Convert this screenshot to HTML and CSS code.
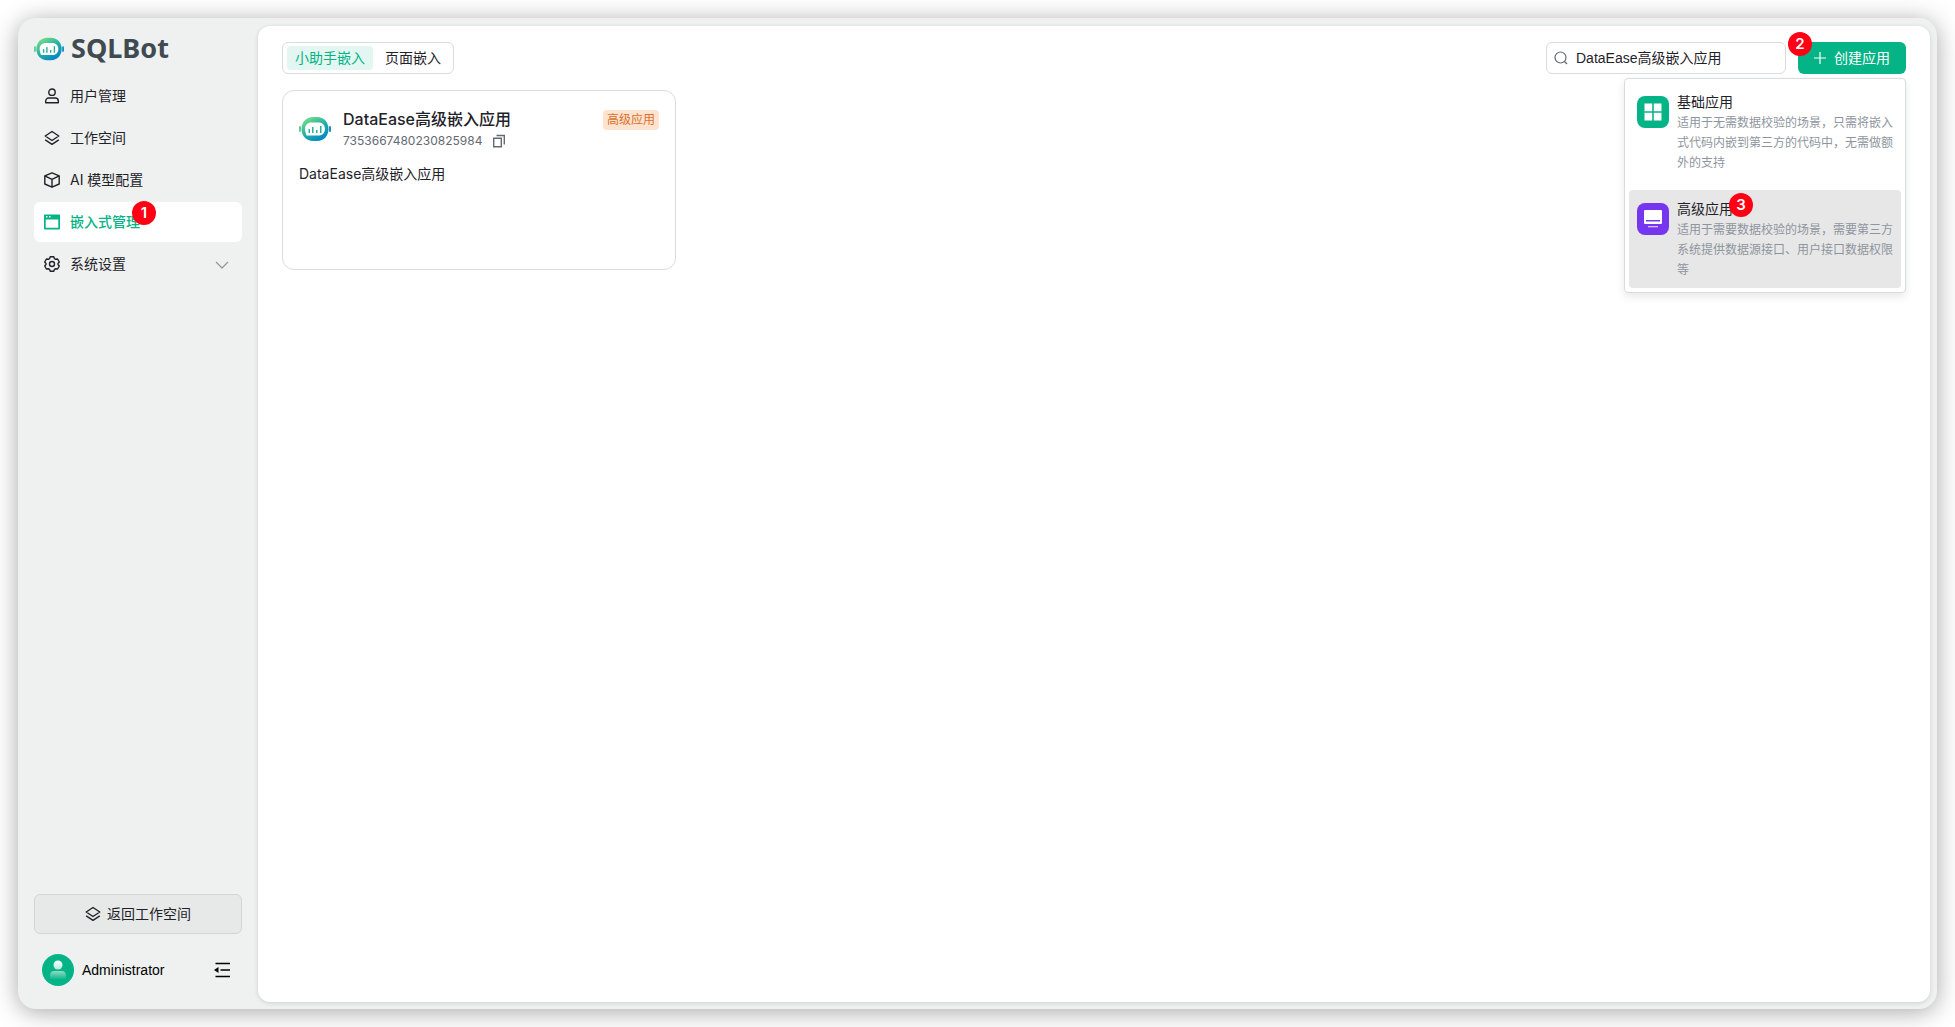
FILE: index.html
```html
<!DOCTYPE html>
<html lang="zh-CN">
<head>
<meta charset="utf-8">
<meta name="viewport" content="width=device-width, initial-scale=1">
<title>SQLBot</title>
<link rel="stylesheet" href="styles.css">
</head>
<body>
<svg class="defs" width="0" height="0" aria-hidden="true">
  <defs>
    <linearGradient id="bot-fill" x1="0.1" y1="0" x2="0.75" y2="1">
      <stop offset="0" stop-color="#84e384"/>
      <stop offset="0.5" stop-color="#27b3a4"/>
      <stop offset="1" stop-color="#0084c8"/>
    </linearGradient>
    <linearGradient id="avatar-head" x1="0" y1="0" x2="0" y2="1">
      <stop offset="0" stop-color="#fff"/>
      <stop offset="1" stop-color="#b8eadc"/>
    </linearGradient>
    <linearGradient id="avatar-body" x1="0" y1="0" x2="0" y2="1">
      <stop offset="0" stop-color="#8fdcc5"/>
      <stop offset="1" stop-color="#12b78e"/>
    </linearGradient>
    <symbol id="bot" viewBox="0 0 32 32">
      <rect x="0" y="13" width="2" height="6" rx="1" fill="#5fcf96"/>
      <rect x="30" y="13" width="2" height="6" rx="1" fill="#1a8fc0"/>
      <path fill="url(#bot-fill)" d="M14 4h4c7 0 11.500 5.500 11.500 12S25 28 18 28h-4C7 28 2.500 22.500 2.500 16S7 4 14 4Z"/>
      <path fill="#fff" d="M12.500 9.500c-4 0-6.500 2.600-6.500 6.300 0 2.700.8 4.200 1.500 6.700h12c3.900 0 6.500-2.700 6.500-6.500s-2.600-6.500-6.500-6.500Z"/>
      <g fill="#2fae9f">
        <rect x="9.500" y="16" width="1.500" height="4"/><rect x="13" y="14" width="1.500" height="6"/>
        <rect x="17" y="17" width="1.500" height="3"/><rect x="21" y="13" width="1.500" height="7"/>
      </g>
    </symbol>
    <symbol id="layers" viewBox="0 0 16 16">
      <path d="M8 1.500 14.800 6 8 10.500 1.200 6ZM1.200 9.800 8 14.300l6.800-4.500"/>
    </symbol>
  </defs>
</svg>
<div class="window">
  <aside class="sidebar">
    <div class="brand">
      <svg class="brand-icon"><use href="#bot"/></svg>
      <span class="brand-name">SQLBot</span>
    </div>
    <nav class="menu">
      <a class="menu-item" href="#">
        <svg class="icon" viewBox="0 0 16 16"><circle cx="8" cy="4.200" r="3.200"/><path d="M1.700 14.800v-1.800a3 3 0 0 1 3-3h6.600a3 3 0 0 1 3 3v1.800Z"/></svg>
        用户管理
      </a>
      <a class="menu-item" href="#"><svg class="icon"><use href="#layers"/></svg>工作空间</a>
      <a class="menu-item" href="#">
        <svg class="icon" viewBox="0 0 16 16"><path d="M8 .8 15.200 3.800v8.200L8 15.200.8 12V3.800ZM.8 3.800 8 7.300l7.200-3.500M8 7.300v7.900"/></svg>
        AI 模型配置
      </a>
      <a class="menu-item active" href="#">
        <svg class="icon" viewBox="0 0 16 16"><path class="solid" fill-rule="evenodd" d="M.7.500h14.600q.7 0 .7.700v13.600q0 .7-.7.700H.7q-.7 0-.7-.7V1.200Q0 .500.700.500ZM1.700 5.500V13.800h12.600V5.500ZM2 2v1.500h1.500V2Zm3 0v1.500h1.500V2Z"/></svg>
        <span class="marked">嵌入式管理<span class="badge badge-menu">1</span></span>
      </a>
      <a class="menu-item" href="#">
        <svg class="icon" viewBox="0 0 16 16"><path d="M6.200.8h3.600l.7 1.900 1.100.6 2-.3 1.700 3-1.300 1.500v1l1.300 1.500-1.700 3-2-.3-1.100.6-.7 1.900H6.200l-.7-1.900-1.100-.6-2 .3-1.700-3L2 8.500v-1L.7 6l1.700-3 2 .3 1.100-.6Z"/><circle cx="8" cy="8" r="2.500"/></svg>
        系统设置
        <svg class="chevron" viewBox="0 0 14 14"><path d="m1 5 6 6 6-6"/></svg>
      </a>
    </nav>
    <div class="sidebar-foot">
      <button class="back" type="button"><svg class="icon"><use href="#layers"/></svg>返回工作空间</button>
      <div class="account">
        <svg class="avatar" viewBox="0 0 32 32"><circle cx="16" cy="16" r="16" fill="#04b486"/><circle cx="16" cy="11" r="4.500" fill="url(#avatar-head)"/><path d="M8 25v-3.500q0-4.500 4.500-4.500h7q4.500 0 4.500 4.500V25Z" fill="url(#avatar-body)"/></svg>
        <span class="account-name">Administrator</span>
        <button class="fold" type="button" aria-label="收起菜单"><svg class="icon" viewBox="0 0 16 16"><path d="M1.500 1.500H16M6.500 8H16M1.500 14.500H16"/><path class="solid" d="M0 8l4.500-3v6Z"/></svg></button>
      </div>
    </div>
  </aside>
  <main class="panel">
    <div class="toolbar">
      <div class="tabs">
        <button class="tab selected" type="button">小助手嵌入</button>
        <button class="tab" type="button">页面嵌入</button>
      </div>
      <div class="actions">
        <label class="search">
          <svg class="search-icon" viewBox="0 0 14 14"><circle cx="6.500" cy="6.500" r="5.500"/><path d="m10.500 10.500 2.500 2.500"/></svg>
          <input type="text" value="DataEase高级嵌入应用" aria-label="搜索">
        </label>
        <div class="create-wrap">
          <button class="create" type="button"><svg class="plus" viewBox="0 0 12 12"><path d="M6 0v12M0 6h12"/></svg>创建应用</button>
          <span class="badge badge-create">2</span>
          <div class="dropdown">
            <button class="option" type="button">
              <svg class="option-icon" viewBox="0 0 32 32"><rect width="32" height="32" rx="8" fill="#04b486"/><path fill="#fff" d="M7.500 7.500h7.700v7.700H7.500ZM16.800 7.500h7.700v7.700h-7.700ZM7.500 16.800h7.700v7.700H7.500ZM16.800 16.800h7.700v7.700h-7.700Z"/></svg>
              <span class="option-text"><span class="option-title">基础应用</span><span class="option-desc">适用于无需数据校验的场景，只需将嵌入式代码内嵌到第三方的代码中，无需做额外的支持</span></span>
            </button>
            <button class="option hovered" type="button">
              <svg class="option-icon" viewBox="0 0 32 32"><rect width="32" height="32" rx="8" fill="#7636f0"/><rect x="7" y="7" width="18" height="14" rx="1" fill="#fff"/><path fill="#7636f0" d="M9 17h14v1.500H9Z"/><path fill="#d5c0fb" d="M11 23h10v1.300H11Z"/></svg>
              <span class="option-text"><span class="option-title"><span class="marked">高级应用<span class="badge badge-option">3</span></span></span><span class="option-desc">适用于需要数据校验的场景，需要第三方系统提供数据源接口、用户接口数据权限等</span></span>
            </button>
          </div>
        </div>
      </div>
    </div>
    <div class="cards">
      <article class="card">
        <header class="card-head">
          <svg class="card-icon"><use href="#bot"/></svg>
          <div class="card-info">
            <h2 class="card-title">DataEase高级嵌入应用</h2>
            <div class="card-id">7353667480230825984
              <button class="copy" type="button" aria-label="复制"><svg viewBox="0 0 14 14"><path d="M1.700 4.200h7.600v8.600H1.700ZM4.500 1.500H12.300v9"/></svg></button>
            </div>
          </div>
          <span class="tag">高级应用</span>
        </header>
        <p class="card-desc">DataEase高级嵌入应用</p>
      </article>
    </div>
  </main>
</div>
</body>
</html>
```

FILE: styles.css
```css
* { box-sizing: border-box; }

body {
  margin: 0;
  height: 100vh;
  padding: 18px;
  background: #fff;
  color: #1f2329;
  font: 14px/22px Inter, "Noto Sans CJK SC", sans-serif;
}

button {
  margin: 0;
  padding: 0;
  border: 0;
  background: none;
  color: inherit;
  font: inherit;
  cursor: pointer;
}

svg { flex: none; display: block; }
.defs { position: absolute; }

.window {
  display: flex;
  height: 100%;
  padding: 8px 7px 7px 0;
  border-radius: 18px;
  background: #eff1f0;
  box-shadow: 0 3px 24px rgba(0, 0, 0, 0.35);
}

/* Sidebar */
.sidebar {
  display: flex;
  flex-direction: column;
  width: 240px;
  padding: 8px 16px;
}
.brand {
  display: flex;
  align-items: center;
  gap: 7px;
  height: 30px;
  margin-bottom: 12px;
}
.brand-icon { width: 30px; height: 30px; }
.brand-name {
  color: #3f4b50;
  font: bold 27px/28px "Noto Sans", sans-serif;
  padding-bottom: 2px;
}
.menu { display: flex; flex-direction: column; gap: 2px; }
.menu-item {
  display: flex;
  align-items: center;
  gap: 10px;
  height: 40px;
  padding: 0 13px 0 10px;
  border-radius: 6px;
  color: inherit;
  text-decoration: none;
}
.menu-item.active { background: #fff; color: #04b486; font-weight: 500; }
.icon, .chevron, .search-icon, .plus, .copy svg {
  width: 16px;
  height: 16px;
  fill: none;
  stroke: currentColor;
  stroke-width: 1.4;
  stroke-linejoin: round;
}
.solid { fill: currentColor; stroke: none; }
.menu-item .chevron { width: 14px; height: 14px; margin-left: auto; color: #8f959e; stroke-width: 1.2; }
.sidebar-foot { margin-top: auto; }
.back {
  display: flex;
  align-items: center;
  justify-content: center;
  gap: 6px;
  width: 100%;
  height: 40px;
  border: 1px solid #d3d6d6;
  border-radius: 6px;
  background: #e7e9e8;
}
.account {
  display: flex;
  align-items: center;
  gap: 8px;
  margin-top: 20px;
  padding: 0 12px 8px 8px;
  color: #000;
}
.avatar { width: 32px; height: 32px; }
.account-name { font-family: "Liberation Sans", sans-serif; }
.fold { margin-left: auto; }

/* Main panel */
.panel {
  flex: 1;
  min-width: 0;
  padding: 16px 24px;
  border-radius: 12px;
  background: #fff;
  box-shadow: 0 1px 4px rgba(31, 35, 41, 0.16);
}
.toolbar { display: flex; justify-content: space-between; }
.tabs {
  display: flex;
  gap: 4px;
  padding: 3px 4px;
  border: 1px solid #d9dcdf;
  border-radius: 6px;
}
.tab { height: 24px; padding: 0 8px; border-radius: 4px; }
.tab.selected { background: #e3f6f1; color: #04b486; }
.actions { display: flex; gap: 12px; }
.search {
  display: flex;
  align-items: center;
  gap: 8px;
  width: 240px;
  height: 32px;
  padding: 0 7px;
  border: 1px solid #d9dcdf;
  border-radius: 6px;
}
.search-icon { width: 14px; height: 14px; color: #646a73; stroke-width: 1.2; }
.search input {
  flex: 1;
  min-width: 0;
  padding: 0;
  border: 0;
  outline: 0;
  background: none;
  color: #1f2329;
  font: 14px/22px "Liberation Sans", "Noto Sans CJK SC", sans-serif;
}
.create-wrap { position: relative; }
.create {
  display: flex;
  align-items: center;
  gap: 8px;
  height: 32px;
  padding: 0 16px;
  border-radius: 6px;
  background: #04b486;
  color: #fff;
}
.plus { width: 12px; height: 12px; stroke-width: 1.2; }

.dropdown {
  position: absolute;
  top: 36px;
  right: 0;
  display: flex;
  flex-direction: column;
  gap: 9px;
  width: 282px;
  padding: 4px;
  border: 1px solid #d9dcdf;
  border-radius: 4px;
  background: #fff;
  box-shadow: 0 4px 8px rgba(31, 35, 41, 0.1);
}
.option {
  display: flex;
  gap: 8px;
  padding: 8px;
  border-radius: 4px;
  text-align: left;
}
.option.hovered { background: #e7e7e7; }
.option-icon { width: 32px; height: 32px; margin-top: 5px; }
.option-title, .option-desc { display: block; }
.option-desc { color: #8f959e; font-size: 12px; line-height: 20px; }

/* Application cards */
.cards {
  display: grid;
  grid-template-columns: repeat(4, 1fr);
  gap: 16px;
  margin-top: 16px;
}
.card {
  height: 180px;
  padding: 16px;
  border: 1px solid #d9dcdf;
  border-radius: 12px;
}
.card-head { display: flex; align-items: center; gap: 12px; }
.card-icon { width: 32px; height: 32px; }
.card-info { flex: 1; }
.card-title { margin: 0; font-size: 16px; font-weight: 500; line-height: 24px; }
.card-id {
  display: flex;
  align-items: center;
  gap: 10px;
  color: #646a73;
  font-size: 12px;
  line-height: 20px;
}
.copy svg { width: 14px; height: 14px; stroke-linejoin: miter; }
.tag {
  align-self: flex-start;
  margin-top: 3px;
  padding: 0 4px;
  border-radius: 4px;
  background: #ffe3cf;
  color: #d9702b;
  font-size: 12px;
  line-height: 20px;
}
.card-desc { margin: 12px 0 0; }

/* Step markers */
.marked { position: relative; }
.badge {
  position: absolute;
  width: 24px;
  height: 24px;
  border-radius: 50%;
  background: #ff0015;
  color: #fff;
  font: 600 15px/23px Inter, sans-serif;
  text-align: center;
}
.badge-menu { left: 62px; top: -10px; }
.badge-create { left: -10px; top: -10px; }
.badge-option { left: 52px; top: -7px; }
```
